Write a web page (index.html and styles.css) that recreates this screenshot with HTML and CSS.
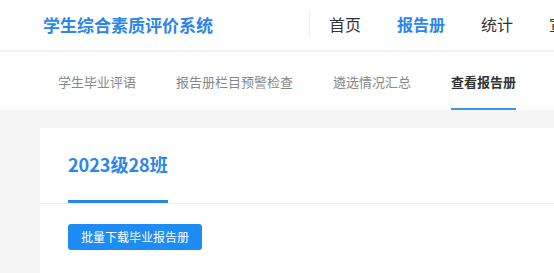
FILE: index.html
```html
<!DOCTYPE html>
<html lang="zh-CN">
<head>
    <meta charset="UTF-8">
    <meta name="viewport" content="width=device-width, initial-scale=1.0">
    <title>学生综合素质评价系统</title>
    <link rel="stylesheet" href="styles.css">
</head>
<body>
    <div class="header">
        <div class="logo">学生综合素质评价系统</div>
        <div class="nav">
            <a class="nav-item">首页</a>
            <a class="nav-item active">报告册</a>
            <a class="nav-item">统计</a>
            <a class="nav-item">宣传</a>
        </div>
    </div>
    <div class="subnav">
        <a class="sub-item">学生毕业评语</a>
        <a class="sub-item">报告册栏目预警检查</a>
        <a class="sub-item">遴选情况汇总</a>
        <a class="sub-item active">查看报告册</a>
    </div>
    <div class="main">
        <div class="card">
            <div class="card-head">
                <span class="tab">2023级28班</span>
            </div>
            <div class="card-body">
                <button class="btn">批量下载毕业报告册</button>
            </div>
        </div>
    </div>
</body>
</html>
```
FILE: styles.css
```css
* {
    box-sizing: border-box;
}
body {
    margin: 0;
    font-family: "Noto Sans CJK SC", "Microsoft YaHei", sans-serif;
    background: #f5f5f5;
    overflow: hidden;
    width: 554px;
    height: 273px;
}
.header {
    display: flex;
    align-items: center;
    height: 52px;
    padding: 0 0 2px 43px;
    background: #fff;
    border-bottom: 2px solid #f2f2f2;
    white-space: nowrap;
    overflow: hidden;
}
.logo {
    flex-shrink: 0;
    width: 266px;
    font-size: 17px;
    font-weight: bold;
    color: #2b86ec;
}
.nav {
    flex-shrink: 0;
    display: flex;
    align-items: center;
    border-left: 1px solid #eee;
    height: 25px;
    padding-left: 1px;
}
.nav-item {
    padding: 0 18px;
    font-size: 16px;
    color: #333;
}
.nav-item.active {
    color: #2b86ec;
    font-weight: bold;
}
.subnav {
    display: flex;
    height: 58px;
    padding-left: 38px;
    background: #fff;
    white-space: nowrap;
}
.sub-item {
    display: flex;
    align-items: center;
    margin: 0 20px;
    font-size: 13px;
    color: #888;
    border-bottom: 2px solid transparent;
    padding-top: 2px;
}
.sub-item.active {
    color: #333;
    font-weight: bold;
    border-bottom-color: #3b93ee;
}
.main {
    padding: 18px 0 0 40px;
}
.card {
    background: #fff;
    height: 145px;
}
.card-head {
    padding: 0 28px;
    border-bottom: 1px solid #eee;
    height: 76px;
}
.tab {
    display: inline-block;
    line-height: 72px;
    font-size: 18px;
    font-weight: bold;
    color: #2b86ec;
    border-bottom: 3px solid #2b86ec;
}
.card-body {
    padding: 19px 28px;
}
.btn {
    height: 26px;
    padding: 0 13px;
    border: none;
    border-radius: 3px;
    background: #1e8cf5;
    color: #fff;
    font-family: inherit;
    font-size: 12px;
}
```
